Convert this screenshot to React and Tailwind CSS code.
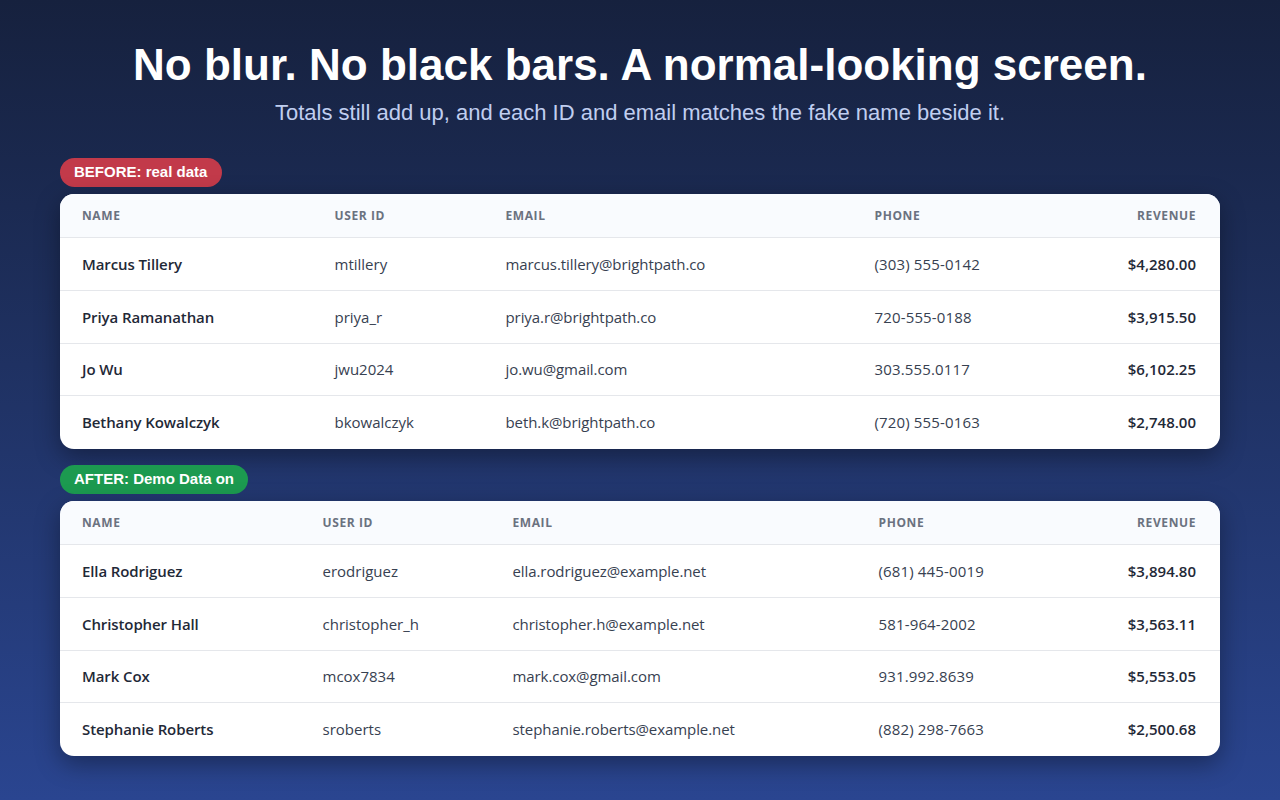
const before = [
  ["Marcus Tillery", "mtillery", "marcus.tillery@brightpath.co", "(303) 555-0142", "$4,280.00"],
  ["Priya Ramanathan", "priya_r", "priya.r@brightpath.co", "720-555-0188", "$3,915.50"],
  ["Jo Wu", "jwu2024", "jo.wu@gmail.com", "303.555.0117", "$6,102.25"],
  ["Bethany Kowalczyk", "bkowalczyk", "beth.k@brightpath.co", "(720) 555-0163", "$2,748.00"],
];
const after = [
  ["Ella Rodriguez", "erodriguez", "ella.rodriguez@example.net", "(681) 445-0019", "$3,894.80"],
  ["Christopher Hall", "christopher_h", "christopher.h@example.net", "581-964-2002", "$3,563.11"],
  ["Mark Cox", "mcox7834", "mark.cox@gmail.com", "931.992.8639", "$5,553.05"],
  ["Stephanie Roberts", "sroberts", "stephanie.roberts@example.net", "(882) 298-7663", "$2,500.68"],
];

const rowStyles = [
  "h-[53px] border-b border-[#e5e7eb]",
  "h-[53px] border-b border-[#e5e7eb]",
  "h-[52px] border-b border-[#e5e7eb]",
  "h-[53px]",
];
const thBase = "h-[44px] border-b border-[#e5e7eb] font-bold";

function DataTable({ rows, cols }) {
  return (
    <div className="overflow-hidden rounded-[14px] bg-white shadow-[0_8px_24px_rgba(0,0,0,0.35)]">
      <table className="w-full table-fixed border-separate border-spacing-0 font-['Open_Sans',sans-serif] text-[15px]">
        <colgroup>
          {cols.map((c) => (
            <col key={c} className={c} />
          ))}
          <col />
        </colgroup>
        <thead>
          <tr className="bg-[#f9fbfe] text-left text-[12px] uppercase tracking-[0.05em] text-[#6b7280]">
            <th className={thBase + " pl-[22px]"}>Name</th>
            <th className={thBase + " pl-[22px]"}>User ID</th>
            <th className={thBase + " pl-[22px]"}>Email</th>
            <th className={thBase + " pl-[22px]"}>Phone</th>
            <th className={thBase + " pr-[24px] text-right"}>Revenue</th>
          </tr>
        </thead>
        <tbody>
          {rows.map((r, i) => (
            <tr key={r[0]}>
              <td className={rowStyles[i] + " pl-[22px] font-semibold tracking-[-0.1px] text-[#1f2937]"}>{r[0]}</td>
              <td className={rowStyles[i] + " pl-[22px] text-[#374151]"}>{r[1]}</td>
              <td className={rowStyles[i] + " pl-[22px] tracking-[-0.08px] text-[#374151]"}>{r[2]}</td>
              <td className={rowStyles[i] + " pl-[22px] tracking-[0.15px] text-[#374151]"}>{r[3]}</td>
              <td className={rowStyles[i] + " pr-[24px] text-right font-semibold text-[#1f2937]"}>{r[4]}</td>
            </tr>
          ))}
        </tbody>
      </table>
    </div>
  );
}

export default function App() {
  return (
    <div className="h-[800px] w-[1280px] overflow-hidden bg-gradient-to-b from-[#16213e] to-[#2a4590] px-[60px] pt-[40px] font-['Liberation_Sans',sans-serif]">
      <h1 className="text-center text-[44px] font-bold leading-[50px] text-white">
        No blur. No black bars. A normal-looking screen.
      </h1>
      <p className="mt-[10px] text-center text-[22px] leading-[26px] text-[#c0cef0]">
        Totals still add up, and each ID and email matches the fake name beside it.
      </p>
      <div className="mt-[32px] flex flex-col gap-[7px]">
        <span className="w-[162px] rounded-full bg-[#c23a4a] pb-[7px] pl-[14px] pt-[5px] text-[15px] font-bold leading-[17px] text-white">BEFORE: real data</span>
        <DataTable rows={before} cols={["w-[252.5px]", "w-[171px]", "w-[369px]", "w-[218px]"]} />
      </div>
      <div className="mt-[16px] flex flex-col gap-[7px]">
        <span className="w-[188px] rounded-full bg-[#1c9a50] pb-[7px] pl-[14px] pt-[5px] text-[15px] font-bold leading-[17px] text-white">AFTER: Demo Data on</span>
        <DataTable rows={after} cols={["w-[240.5px]", "w-[190px]", "w-[366px]", "w-[214px]"]} />
      </div>
    </div>
  );
}
